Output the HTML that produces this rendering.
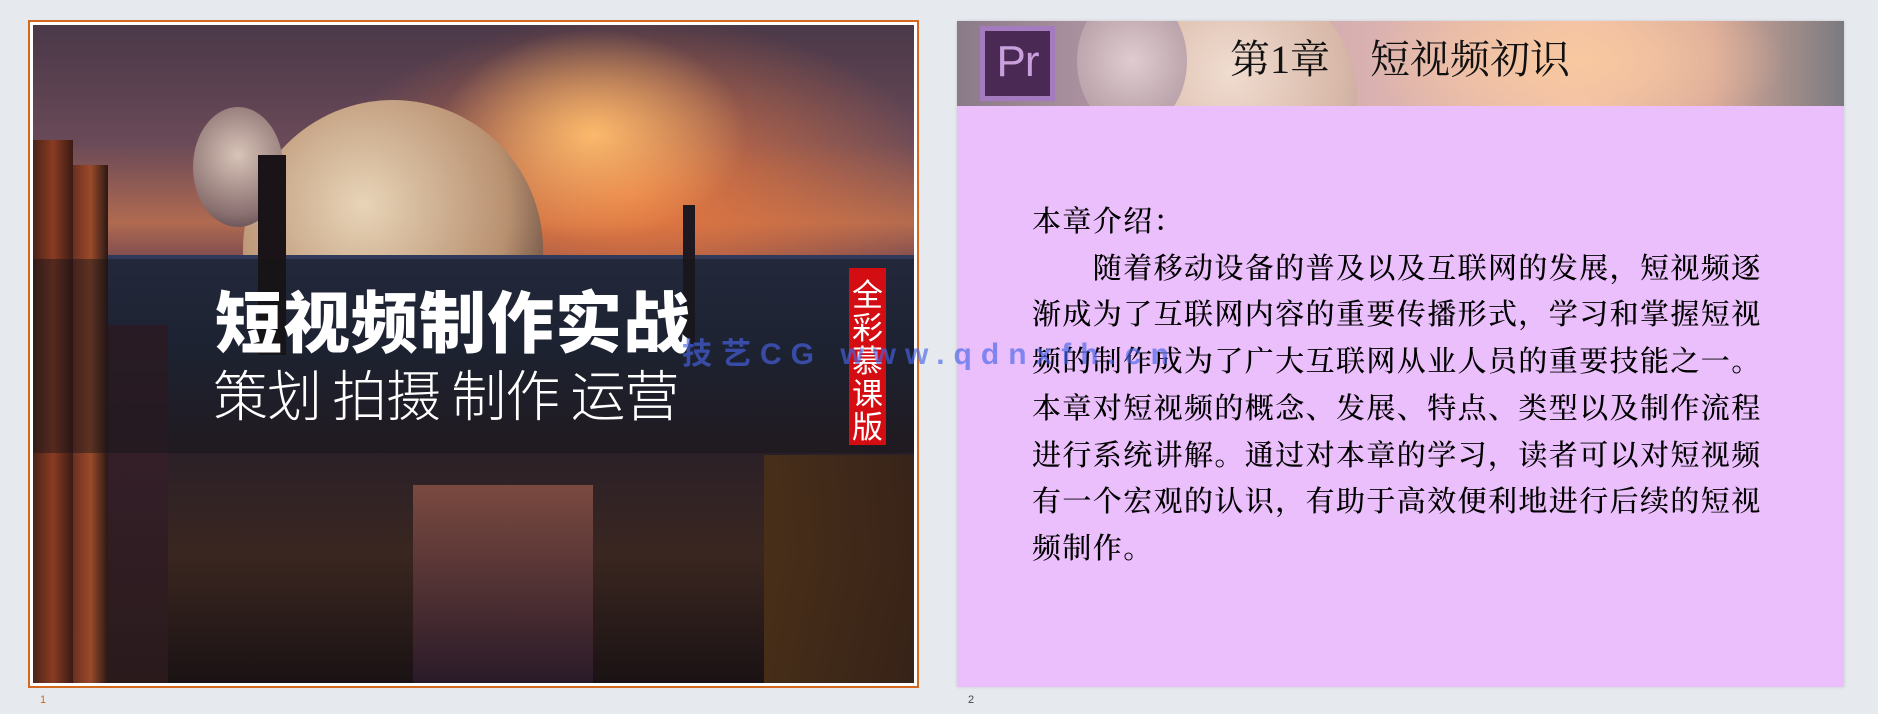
<!DOCTYPE html>
<html><head><meta charset="utf-8"><style>
*{margin:0;padding:0;box-sizing:border-box}
body{width:1878px;height:714px;background:#e6eaef;position:relative;overflow:hidden;font-family:"Liberation Sans","Noto Sans CJK SC",sans-serif}
.s1{position:absolute;left:28px;top:20px;width:891px;height:668px;border:2px solid #d2691e;background:#fff}
.img{position:absolute;left:3px;top:3px;right:3px;bottom:3px;overflow:hidden;
background:
radial-gradient(ellipse 220px 150px at 560px 110px,rgba(255,190,110,.95),rgba(255,150,80,0) 70%),
radial-gradient(ellipse 420px 240px at 600px 170px,rgba(235,120,60,.9),rgba(200,90,60,0) 75%),
linear-gradient(180deg,#4a3848 0%,#6a4a58 18%,#b06a50 30%,#7a4a50 36%,#2a2a40 42%,#1e1c2a 60%,#1a1218 100%)}
.planet{position:absolute;border-radius:50%}
.band{position:absolute;left:0;right:0;top:234px;height:194px;background:rgba(20,20,25,.45)}
.t1{position:absolute;left:182px;top:260px;font:900 67px/1 "Noto Sans CJK SC",sans-serif;color:#fff;letter-spacing:1px;white-space:nowrap}
.t2{position:absolute;left:180px;top:340px;font:300 55px/1 "Noto Sans CJK SC",sans-serif;color:#fff;white-space:nowrap;letter-spacing:-1px}
.red{position:absolute;left:816px;top:243px;width:37px;height:177px;background:#d40d12;color:#fff;font:400 31px/33px "Noto Sans CJK SC",sans-serif;text-align:center;padding-top:8px}
.wm{position:absolute;left:682px;top:340px;font:700 30px/1 "Liberation Sans","Noto Sans CJK SC",sans-serif;color:rgba(70,100,230,.65);letter-spacing:9px;white-space:nowrap;z-index:5}
.s2{position:absolute;left:957px;top:21px;width:887px;height:666px;background:#ebbffc;box-shadow:0 0 3px rgba(0,0,0,.15)}
.hdr{position:absolute;left:0;top:0;width:100%;height:85px;overflow:hidden;
background:radial-gradient(ellipse 300px 120px at 620px 40px,#f8c8a0,rgba(240,190,160,0) 70%),linear-gradient(90deg,#8a7a88 0%,#b89aa8 20%,#d8b0b0 45%,#f0c0a8 70%,#d8a898 85%,#7a7a80 100%)}
.pr{position:absolute;left:23px;top:5px;width:75px;height:75px;background:#a57bbf;padding:5px}
.pr div{width:100%;height:100%;background:#4a2a55;color:#c9a0dc;font:400 44px/62px "Liberation Sans",sans-serif;text-align:center;letter-spacing:-1px}
.ht{position:absolute;left:273px;top:19px;font:400 40px/1 "Liberation Serif","Noto Serif CJK SC",serif;color:#111;white-space:nowrap}
.body{position:absolute;left:75px;top:178px;width:740px;font:500 29px/46.7px "Liberation Serif","Noto Serif CJK SC",serif;color:#000;letter-spacing:1.4px}
.pn{position:absolute;top:694px;font-size:11px;color:#444}
</style></head><body>
<div class="s1"><div class="img">
<div class="planet" style="left:210px;top:75px;width:300px;height:300px;background:radial-gradient(circle at 40% 35%,#e8d4b8,#b89070 55%,#5a4038 80%)"></div>
<div class="planet" style="left:160px;top:82px;width:90px;height:120px;background:radial-gradient(circle at 50% 40%,#d8c4b8,#8a7070 70%,#504048)"></div>
<div style="position:absolute;left:0;right:0;top:230px;bottom:0;background:linear-gradient(180deg,#303a58 0%,#253048 20%,#2a2028 45%,#3a2620 70%,#1a1214 100%)"></div>
<div style="position:absolute;left:0;top:115px;width:40px;bottom:0;background:linear-gradient(90deg,#4a2418,#8a3c22 50%,#3a1a14)"></div>
<div style="position:absolute;left:40px;top:140px;width:35px;bottom:0;background:linear-gradient(90deg,#6a3020,#9a4a2a 50%,#2a1814)"></div>
<div style="position:absolute;left:75px;top:300px;width:60px;bottom:0;background:linear-gradient(180deg,#3a2230,#2a1a1c)"></div>
<div style="position:absolute;left:225px;top:130px;width:28px;height:200px;background:#1a1418"></div>
<div style="position:absolute;left:650px;top:180px;width:12px;height:140px;background:#1e1820"></div>
<div style="position:absolute;right:0;top:430px;width:150px;bottom:0;background:linear-gradient(90deg,#4a3018,#3a2418);opacity:.9"></div>
<div style="position:absolute;left:380px;top:460px;width:180px;bottom:0;background:linear-gradient(180deg,#7a4a40,#2a1a28)"></div>
<div class="band"></div>
<div class="t1">短视频制作实战</div>
<div class="t2">策划 拍摄 制作 运营</div>
<div class="red">全<br>彩<br>慕<br>课<br>版</div>
</div></div>
<div class="wm">技艺CG www.qdnxfh.cn</div>
<div class="s2">
<div class="hdr">
<div class="planet" style="left:170px;top:-40px;width:230px;height:230px;background:radial-gradient(circle at 45% 40%,#f0dcd0,#d8b8a8 60%,#b09090)"></div>
<div class="planet" style="left:120px;top:-30px;width:110px;height:140px;background:radial-gradient(circle,#e0ccd0,#a89098)"></div>
<div class="pr"><div>Pr</div></div>
<div class="ht">第1章&nbsp;&nbsp;&nbsp;&nbsp;短视频初识</div>
</div>
<div class="body">本章介绍：<br>&emsp;&emsp;随着移动设备的普及以及互联网的发展，短视频逐渐成为了互联网内容的重要传播形式，学习和掌握短视频的制作成为了广大互联网从业人员的重要技能之一。本章对短视频的概念、发展、特点、类型以及制作流程进行系统讲解。通过对本章的学习，读者可以对短视频有一个宏观的认识，有助于高效便利地进行后续的短视频制作。</div>
</div>
<div class="pn" style="left:40px;color:#d2691e">1</div>
<div class="pn" style="left:968px">2</div>
</body></html>
